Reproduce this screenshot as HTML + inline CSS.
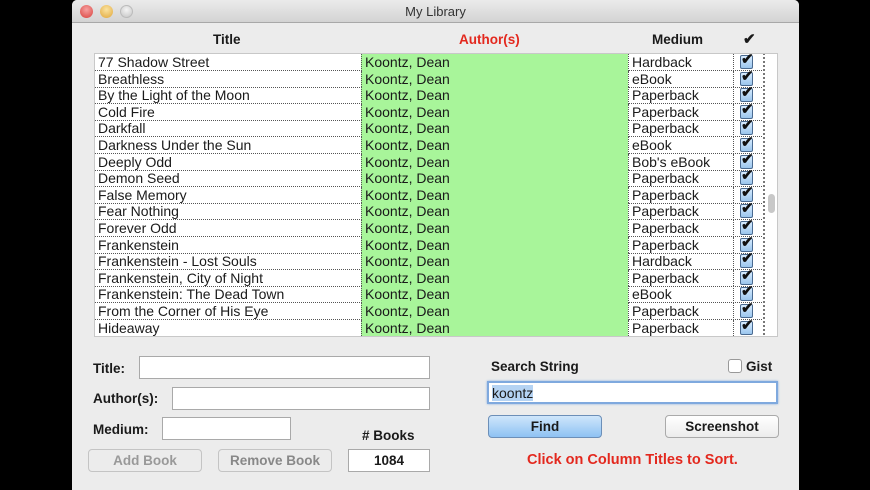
<!DOCTYPE html>
<html><head><meta charset="utf-8"><style>
*{margin:0;padding:0;box-sizing:border-box}
body{width:870px;height:490px;background:#000;position:relative;overflow:hidden;font-family:"Liberation Sans",sans-serif;font-size:13px;color:#1a1a1a}
.win{position:absolute;left:72px;top:0;width:727px;height:490px;background:#ececec;border-radius:5px 5px 0 0;overflow:hidden}
.tb{position:absolute;left:0;top:0;width:100%;height:23px;background:linear-gradient(#ebebeb,#d3d3d3);border-bottom:1px solid #a8a8a8;text-align:center;line-height:23px;font-size:13px;color:#333}
.dot{position:absolute;top:5px;width:13px;height:13px;border-radius:50%}
.a{position:absolute}
.hd{position:absolute;top:32px;font-weight:bold;font-size:13.5px}
.tbl{position:absolute;left:22px;top:53px;width:684px;height:284px;background:#fff;border:1px solid #c8c8c8;overflow:hidden}
.row{position:absolute;left:0;height:17px;width:667px;border-bottom:1px dotted #555}
.row span{position:absolute;top:0;line-height:16px;padding-left:3px;height:16.6px;font-size:14px;white-space:nowrap}
.c1{left:0;width:266px}
.c2{left:266px;width:267px;background:#a8f59a;border-left:1px dotted #555}
.c3{left:533px;width:106px;border-left:1px dotted #555;border-right:1px dotted #555}
.cb{position:absolute;left:645px;top:1px;width:13px;height:14px;border:1px solid #4a6a90;border-radius:2px;background:linear-gradient(#d8ecff,#9cc6ee)}
.cb:after{content:"✔";position:absolute;left:0;top:-6px;font-size:15px;font-weight:bold;color:#111}
.inp{position:absolute;background:#fff;border:1px solid #a9a9a9;height:23px}
.lbl{position:absolute;font-weight:bold;font-size:13.5px}
.btn{position:absolute;height:23px;border:1px solid #aaa;border-radius:4px;text-align:center;line-height:21px;font-weight:bold;font-size:13.5px;background:linear-gradient(#fff,#ececec)}
</style></head><body>
<div class="win">
<div class="tb">My Library
<div class="dot" style="left:8px;background:radial-gradient(circle at 50% 35%,#f7a0a0,#d8413c)"></div>
<div class="dot" style="left:28px;background:radial-gradient(circle at 50% 35%,#fbe3a0,#e0a63a)"></div>
<div class="dot" style="left:48px;background:radial-gradient(circle at 50% 35%,#f4f4f4,#c4c4c4);border:1px solid #bbb"></div>
</div>
<div class="hd" style="left:141px">Title</div>
<div class="hd" style="left:387px;color:#e3281e">Author(s)</div>
<div class="hd" style="left:580px">Medium</div>
<div class="hd" style="left:671px;font-size:15px;top:30px">✔</div>
<div class="tbl">
<div class="a" style="left:668px;top:-1px;width:1px;height:286px;border-left:2px dotted #777"></div>
<div class="a" style="left:673px;top:140px;width:7px;height:19px;border-radius:4px;background:#c8c8c8"></div>
ROWS
</div>
<div class="lbl" style="left:21px;top:361px">Title:</div>
<div class="inp" style="left:67px;top:356px;width:291px"></div>
<div class="lbl" style="left:21px;top:391px">Author(s):</div>
<div class="inp" style="left:100px;top:387px;width:258px"></div>
<div class="lbl" style="left:21px;top:422px">Medium:</div>
<div class="inp" style="left:90px;top:417px;width:129px"></div>
<div class="lbl" style="left:290px;top:428px"># Books</div>
<div class="btn" style="left:16px;top:449px;width:114px;color:#999;background:#ececec;border-color:#c4c4c4">Add Book</div>
<div class="btn" style="left:146px;top:449px;width:114px;color:#888;background:#ececec;border-color:#c4c4c4">Remove Book</div>
<div class="inp" style="left:276px;top:449px;width:82px;text-align:center;font-weight:bold;line-height:22px;font-size:13.5px">1084</div>
<div class="lbl" style="left:419px;top:359px">Search String</div>
<div class="a" style="left:656px;top:359px;width:14px;height:14px;border:1px solid #999;border-radius:3px;background:#fff"></div>
<div class="lbl" style="left:674px;top:359px">Gist</div>
<div class="inp" style="left:415px;top:381px;width:291px;border:2px solid #7fa9de;box-shadow:0 0 2px #7fa9de;line-height:20px;padding-left:3px;font-size:14px"><span style="background:#b5d3f3">koontz</span></div>
<div class="btn" style="left:416px;top:415px;width:114px;background:linear-gradient(#cfe6fb,#8ec2f3);border-color:#6c8fb8">Find</div>
<div class="btn" style="left:593px;top:415px;width:114px">Screenshot</div>
<div class="lbl" style="left:455px;top:452px;color:#e3281e;font-size:14.5px">Click on Column Titles to Sort.</div>
</div>
<script>
var d=[["77 Shadow Street","Hardback"],["Breathless","eBook"],["By the Light of the Moon","Paperback"],["Cold Fire","Paperback"],["Darkfall","Paperback"],["Darkness Under the Sun","eBook"],["Deeply Odd","Bob's eBook"],["Demon Seed","Paperback"],["False Memory","Paperback"],["Fear Nothing","Paperback"],["Forever Odd","Paperback"],["Frankenstein","Paperback"],["Frankenstein - Lost Souls","Hardback"],["Frankenstein, City of Night","Paperback"],["Frankenstein: The Dead Town","eBook"],["From the Corner of His Eye","Paperback"],["Hideaway","Paperback"]];
var h="";d.forEach(function(r,i){var t=(i*16.6).toFixed(1);h+='<div class="row" style="top:'+t+'px"><span class="c1">'+r[0]+'</span><span class="c2">Koontz, Dean</span><span class="c3">'+r[1]+'</span><div class="cb"></div></div>';});
document.querySelector('.tbl').innerHTML=document.querySelector('.tbl').innerHTML.replace('ROWS',h);
</script>
</body></html>
